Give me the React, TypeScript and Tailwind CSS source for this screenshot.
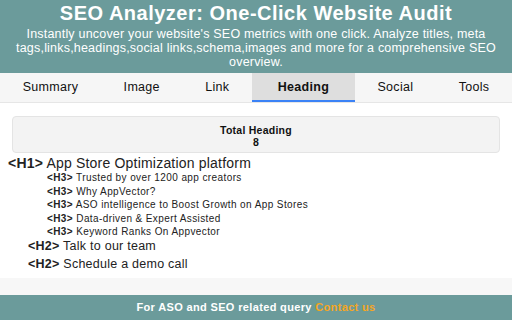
const tabs = ['Summary', 'Image', 'Link', 'Heading', 'Social', 'Tools'];

const h3s = [
  'Trusted by over 1200 app creators',
  'Why AppVector?',
  'ASO intelligence to Boost Growth on App Stores',
  'Data-driven & Expert Assisted',
  'Keyword Ranks On Appvector',
];

export default function App() {
  return (
    <div className="flex h-[320px] w-[512px] flex-col overflow-hidden bg-white font-['Liberation_Sans',Arial,sans-serif] text-[#222]">
      <header className="h-[73px] bg-[#6b9b9b] px-3 pt-[1px] text-center text-white">
        <h1 className="text-[20px] font-bold leading-[24px] tracking-[0.5px]">
          SEO Analyzer: One-Click Website Audit
        </h1>
        <p className="mt-[2px] text-[12.5px] leading-[14px] tracking-[0.2px]">
          Instantly uncover your website's SEO metrics with one click. Analyze titles, meta
          tags,links,headings,social links,schema,images and more for a comprehensive SEO overview.
        </p>
      </header>

      <nav className="flex h-[30px] border-b border-[#e6e6e6] bg-[#f6f6f6]">
        {tabs.map((t) => (
          <div
            key={t}
            className={
              t === 'Heading'
                ? 'flex flex-auto items-center justify-center border-b-2 border-[#3b82f6] bg-[#dedede] px-[3px] pt-[1px] text-[12.5px] font-bold tracking-[0.3px] text-[#111]'
                : 'flex flex-auto items-center justify-center text-[12.5px] tracking-[0.3px] text-[#111]'
            }
          >
            {t}
          </div>
        ))}
      </nav>

      <main className="flex-1 px-3 pt-[13px]">
        <div className="flex h-[37px] flex-col items-center justify-center rounded border border-[#e4e4e4] bg-[#f3f3f3] pt-[3px] text-[10.5px] font-bold leading-[12px] tracking-[0.25px] text-[#111]">
          <div>Total Heading</div>
          <div>8</div>
        </div>
        <div className="-mx-1 mt-[2px]">
          <div className="text-[14px] leading-[17px] tracking-[0.2px]">
            <b>&lt;H1&gt;</b> App Store Optimization platform
          </div>
          <div className="-mt-[1px] pl-[39px]">
            {h3s.map((h) => (
              <div key={h} className="text-[10px] leading-[13.5px] tracking-[0.4px]">
                <b>&lt;H3&gt;</b> {h}
              </div>
            ))}
          </div>
          <div className="-mt-[2px] pl-[20px]">
            {['Talk to our team', 'Schedule a demo call'].map((h) => (
              <div key={h} className="text-[12.5px] leading-[18px] tracking-[0.25px]">
                <b>&lt;H2&gt;</b> {h}
              </div>
            ))}
          </div>
        </div>
      </main>

      <div className="h-[17px] bg-[#f7f7f7]" />
      <footer className="flex h-[25px] items-center justify-center bg-[#6b9b9b] text-[11px] font-bold tracking-[0.35px] text-white">
        For ASO and SEO related query&nbsp;<span className="text-[#f5a623]">Contact us</span>
      </footer>
    </div>
  );
}
